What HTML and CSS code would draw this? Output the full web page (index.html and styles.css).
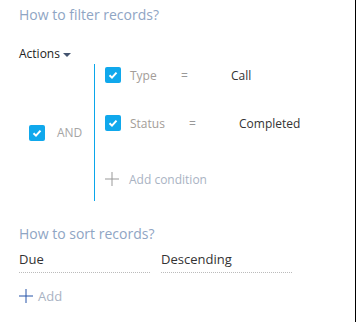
FILE: index.html
```html
<!DOCTYPE html>
<html lang="en">
<head>
    <meta charset="UTF-8">
    <meta name="viewport" content="width=device-width, initial-scale=1.0">
    <title>Filter records</title>
    <link rel="stylesheet" href="styles.css">
</head>
<body>

    <div class="panel">
        <!-- Filter section -->
        <h3 class="section-title">How to filter records?</h3>

        <div class="actions">Actions <span class="caret"></span></div>

        <div class="filter-group">
            <div class="group-op">
                <span class="checkbox"><svg viewBox="0 0 16 16"><path d="M4.5 8.2 L7 10.6 L11.5 5.6" /></svg></span>
                <span class="op-label">AND</span>
            </div>

            <div class="conditions">
                <div class="condition">
                    <span class="checkbox"><svg viewBox="0 0 16 16"><path d="M4.5 8.2 L7 10.6 L11.5 5.6" /></svg></span>
                    <span class="cond-column">Type</span>
                    <span class="cond-compare">=</span>
                    <span class="cond-value">Call</span>
                </div>
                <div class="condition">
                    <span class="checkbox"><svg viewBox="0 0 16 16"><path d="M4.5 8.2 L7 10.6 L11.5 5.6" /></svg></span>
                    <span class="cond-column wide">Status</span>
                    <span class="cond-compare">=</span>
                    <span class="cond-value">Completed</span>
                </div>
                <div class="add-condition">
                    <svg class="plus" viewBox="0 0 14 14"><path d="M7 0 V14 M0 7 H14" /></svg>
                    <span>Add condition</span>
                </div>
            </div>
        </div>

        <!-- Sort section -->
        <h3 class="section-title sort-title">How to sort records?</h3>

        <div class="sort-row">
            <div class="sort-field">Due</div>
            <div class="sort-field">Descending</div>
        </div>

        <div class="add-sort">
            <svg class="plus" viewBox="0 0 14 14"><path d="M7 0 V14 M0 7 H14" /></svg>
            <span>Add</span>
        </div>
    </div>

</body>
</html>
```

FILE: styles.css
```css
/* Basic reset */
* {
    margin: 0;
    padding: 0;
    box-sizing: border-box;
}

body {
    font-family: "Open Sans", Arial, sans-serif;
    background-color: #fff;
    color: #333;
    border-right: 1px solid #000;
    height: 322px;
}

.panel {
    padding: 5px 19px 0 19px;
    display: flex;
    flex-direction: column;
}

.section-title {
    font-weight: normal;
    font-size: 14px;
    line-height: 20px;
    color: #8fa5c4;
}

.actions {
    margin-top: 19px;
    font-size: 12px;
    line-height: 20px;
    color: #222;
}

.caret {
    display: inline-block;
    width: 0;
    height: 0;
    border-left: 4.5px solid transparent;
    border-right: 4.5px solid transparent;
    border-top: 4.5px solid #44546f;
    vertical-align: middle;
    margin-left: 0;
}

.filter-group {
    display: flex;
    margin-top: 0;
}

.group-op {
    width: 75px;
    display: flex;
    align-items: center;
    padding-left: 10px;
}

.op-label {
    margin-left: 12px;
    font-size: 12px;
    color: #a5a5a5;
}

.checkbox {
    width: 16px;
    height: 16px;
    border-radius: 2px;
    background-color: #10a8ec;
    display: inline-flex;
    flex-shrink: 0;
}

.checkbox svg {
    width: 16px;
    height: 16px;
    fill: none;
    stroke: #fff;
    stroke-width: 2;
}

.conditions {
    border-left: 1px solid #0aa6ea;
    padding: 2px 0 13px 10px;
    flex: 1;
    display: flex;
    flex-direction: column;
    gap: 30px;
}

.condition {
    display: flex;
    align-items: center;
    height: 18px;
    font-size: 12px;
}

.cond-column {
    margin-left: 9px;
    width: 51px;
    color: #a39d98;
}

.cond-column.wide {
    width: 59px;
}

.cond-compare {
    width: 50px;
    color: #999;
}

.cond-value {
    color: #333;
}

.add-condition,
.add-sort {
    display: flex;
    align-items: center;
    font-size: 12px;
    color: #a9b3c3;
}

.add-condition {
    margin-top: 8px;
    height: 18px;
}

.plus {
    width: 14px;
    height: 14px;
    fill: none;
    stroke: #999;
    stroke-width: 1;
    margin-right: 10px;
}

.sort-title {
    margin-top: 23px;
}

.sort-row {
    display: flex;
    gap: 11px;
    margin-top: 5px;
}

.sort-field {
    width: 131px;
    font-size: 13px;
    line-height: 20px;
    padding-bottom: 3px;
    border-bottom: 1px dotted #bbb;
    color: #333;
}

.add-sort {
    margin-top: 14px;
    font-size: 13px;
}

.add-sort .plus {
    stroke: #2453a8;
    margin-right: 5px;
}
```
